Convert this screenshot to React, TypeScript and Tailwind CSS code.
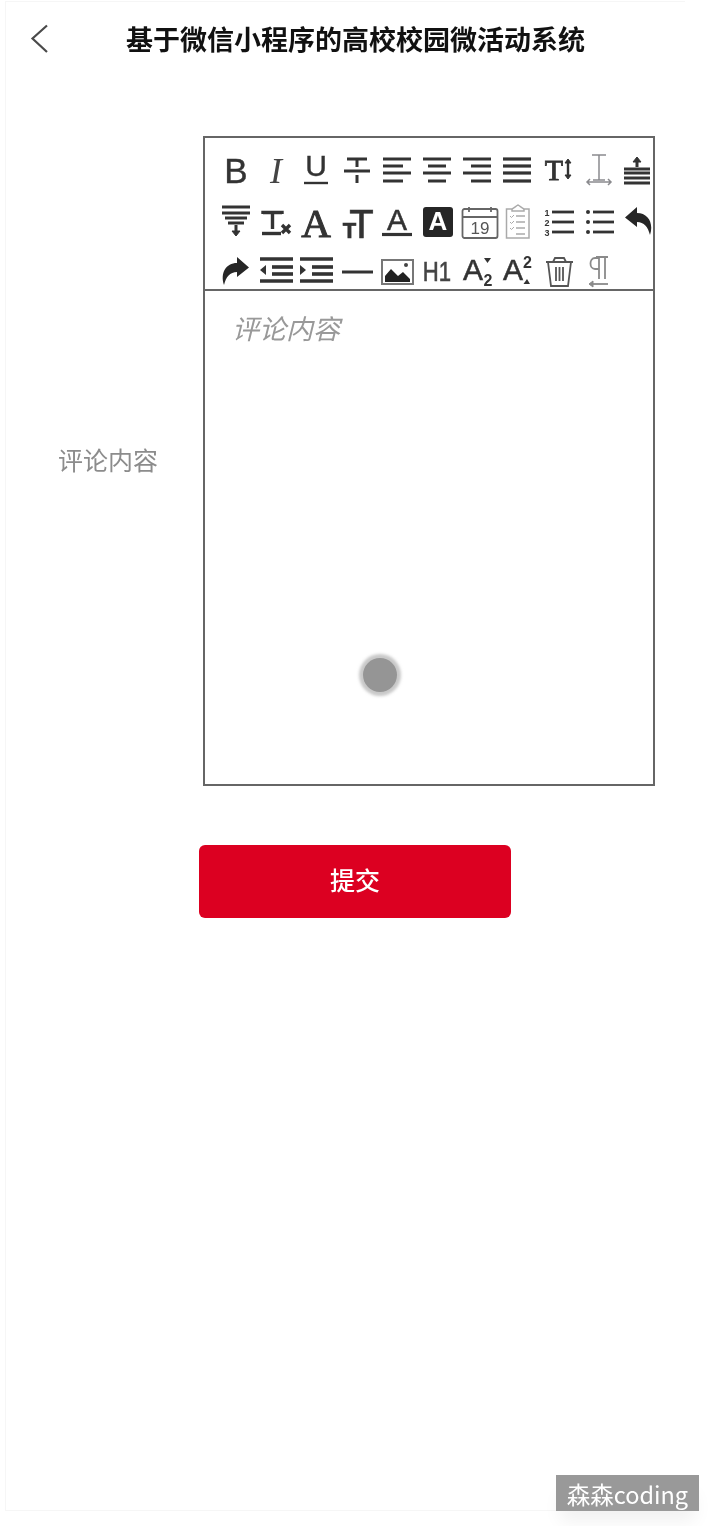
import React from "react";

const S = ({ children, c = "#333", w = 3 }: { children: React.ReactNode; c?: string; w?: number }) => (
  <svg width="40" height="40" viewBox="0 0 40 40" fill="none" stroke={c} strokeWidth={w} className="overflow-visible">
    {children}
  </svg>
);

const sans = "'Liberation Sans', Arial, sans-serif";
const serif = "'Liberation Serif', 'Times New Roman', serif";

const T = ({ x, y, size, font = sans, weight = 400, italic = false, fill = "#333", heavy = 0.7, children }: { x: number; y: number; size: number; font?: string; weight?: number; italic?: boolean; fill?: string; heavy?: number; children: React.ReactNode }) => (
  <text x={x} y={y} fontSize={size} fontFamily={font} fontWeight={weight} fontStyle={italic ? "italic" : "normal"} fill={fill} stroke={fill} strokeWidth={heavy} textAnchor="middle">
    {children}
  </text>
);

const Lines = ({ rows }: { rows: [number, number, number][] }) => (
  <>
    {rows.map(([x1, x2, y], i) => (
      <line key={i} x1={x1} x2={x2} y1={y} y2={y} />
    ))}
  </>
);

const undoPath = "M7 16.5 L19 6 V12 C30 12 36 22 32 34 C30 26 26 21 19 21 V26 Z";

const icons: React.ReactNode[] = [
  <S><T x={20} y={33} size={35} heavy={0.4}>B</T></S>,
  <S><T x={20} y={33} size={36} font={serif} italic fill="#444" heavy={0}>I</T></S>,
  <S><T x={20} y={26} size={30} heavy={0.4}>U</T><line x1="8" x2="32" y1="33" y2="33" strokeWidth={2.4} /></S>,
  <S><path d="M10 9H30M20 9V17M20 25V33M7 21H33" /></S>,
  <S><Lines rows={[[6, 34, 9], [6, 26, 16], [6, 34, 23], [6, 26, 31]]} /></S>,
  <S><Lines rows={[[6, 34, 9], [11, 29, 16], [6, 34, 23], [11, 29, 31]]} /></S>,
  <S><Lines rows={[[6, 34, 9], [14, 34, 16], [6, 34, 23], [14, 34, 31]]} /></S>,
  <S w={3.2}><Lines rows={[[6, 34, 9], [6, 34, 16], [6, 34, 23], [6, 34, 31]]} /></S>,
  <S w={2.4}><T x={16} y={30} size={30} font={serif} heavy={0.8}>T</T><path d="M30 11V27" /><path d="M27 13L30 9L33 13ZM27 25L30 29L33 25Z" fill="#333" strokeWidth={1} /></S>,
  <S c="#8a8a8e" w={1.5}><path d="M14 5H28M21 5V30M15 30H27M9 32H33M12 29L9 32L12 35M30 29L33 32L30 35" /></S>,
  <S><Lines rows={[[6, 32, 19], [6, 32, 23], [6, 32, 28], [6, 32, 33]]} /><path d="M19 10V17" /><path d="M15 12L19 7L23 12Z" fill="#333" strokeWidth={1} /></S>,

  <S><Lines rows={[[6, 34, 6], [6, 34, 12], [9, 31, 17], [12, 28, 22]]} /><path d="M20 24V32" /><path d="M16 30L20 35L24 30Z" fill="#333" strokeWidth={1} /></S>,
  <S w={3.4}><path d="M7 13V11.5H26V13M16.5 12V28" /><path d="M6 32.5H25" /><path d="M26 24L34 32M34 24L26 32" /></S>,
  <S><T x={20} y={36} size={41} font={serif} heavy={1}>A</T></S>,
  <S><T x={24.4} y={37} size={40} font={sans} fill="#333" heavy={0.6}>T</T><T x={12.4} y={37} size={22} weight={700}>T</T></S>,
  <S w={3.2}><T x={20} y={29} size={30} heavy={0.5}>A</T><line x1="5" x2="35" y1="33.5" y2="33.5" /></S>,
  <S><rect x="6" y="6" width="30" height="30" rx="3" fill="#262626" stroke="none" /><T x={21} y={29} size={26} weight={700} fill="#fff" heavy={0}>A</T></S>,
  <S c="#666" w={1.8}><rect x="5.5" y="8" width="35" height="29" rx="2" /><path d="M5.5 16H40.5M12 6V11M34 6V11M12 8H34" /><T x={23} y={33} size={17} fill="#555" heavy={0}>19</T></S>,
  <S c="#aaa" w={1.5}><path d="M15 8H9.5V37H32V8H27M15 10V8C17 7 18 6 21 4C24 6 25 7 27 8V10Z" /><path d="M19 15H28M19 21H28M19 27H28M19 33H28" /><path d="M13 15L14.5 16.5L17 14M13 21L14.5 22.5L17 20M13 27L14.5 28.5L17 26" strokeWidth={1} /></S>,
  <S w={2.8}><Lines rows={[[14, 36, 11], [14, 36, 21], [14, 36, 31]]} /><T x={9} y={15} size={9} weight={700} heavy={0}>1</T><T x={9} y={25} size={9} weight={700} heavy={0}>2</T><T x={9} y={35} size={9} weight={700} heavy={0}>3</T></S>,
  <S w={2.8}><Lines rows={[[15, 36, 11], [15, 36, 21], [15, 36, 31]]} /><circle cx="10" cy="11" r="2" fill="#333" stroke="none" /><circle cx="10" cy="21" r="2" fill="#333" stroke="none" /><circle cx="10" cy="31" r="2" fill="#333" stroke="none" /></S>,
  <S><path d={undoPath} fill="#262626" stroke="none" /></S>,

  <S><path d={undoPath} transform="translate(40 0) scale(-1 1)" fill="#262626" stroke="none" /></S>,
  <S w={3.6}><Lines rows={[[4, 37, 8], [16, 37, 16], [16, 37, 23], [4, 37, 30]]} /><path d="M10 14V24L4 19Z" fill="#333" strokeWidth={0} /></S>,
  <S w={3.6}><Lines rows={[[4, 37, 8], [16, 37, 16], [16, 37, 23], [4, 37, 30]]} /><path d="M4 14V24L10 19Z" fill="#333" strokeWidth={0} /></S>,
  <S w={3}><line x1="5" x2="36" y1="21" y2="21" /></S>,
  <S c="#777" w={2}><rect x="5" y="9" width="31" height="24" /><path d="M8 31V25L14 18L21 25L26 21L33 28V31Z" fill="#222" stroke="none" /><circle cx="29" cy="14" r="2" fill="#444" stroke="none" /></S>,
  <S><g transform="translate(20 30) scale(0.82 1)"><T x={0} y={0} size={27} fill="#444" heavy={0.6}>H1</T></g></S>,
  <S><T x={16} y={29} size={30} heavy={0.5}>A</T><T x={31} y={35} size={16} weight={700} heavy={0}>2</T><path d="M27 7H34L30.5 12Z" fill="#333" stroke="none" /></S>,
  <S><T x={16} y={29} size={30} heavy={0.5}>A</T><T x={30.5} y={17} size={16} weight={700} heavy={0}>2</T><path d="M26.5 33H33L30 28Z" fill="#333" stroke="none" /></S>,
  <S c="#555" w={1.8}><path d="M8 11H35M15 11L17 7H26L28 11M10 11L13 35H30L33 11M18 16V30M21.5 16V30M25 16V30" /></S>,
  <S c="#8a8a8a" w={1.8}><path d="M21 7H17C11 7 11 18 17 18H21M21 6V28M27 6V28M18 6H30" /><path d="M14 33H30" /><path d="M15 30L11 33L15 36Z" fill="#8a8a8a" strokeWidth={1} /></S>,
];

export default function App() {
  return (
    <div
      className="relative h-[1526px] w-full overflow-hidden bg-white text-[#333] blur-[0.4px]"
      style={{ fontFamily: "'Noto Sans CJK SC', sans-serif" }}
    >
      <div className="ml-[5px] mr-[24px] mt-[1px] h-[1510px] border-y border-l border-[#f6f6f6]">
        <header className="relative flex h-[78px] items-center justify-center pb-[4px] pl-[20px]">
          <svg width="20" height="30" viewBox="0 0 20 30" fill="none" stroke="#4a4a4a" strokeWidth="2.2" className="absolute left-[24px] top-[22px]">
            <path d="M17 1.5L2.5 14.5L17 28" />
          </svg>
          <h1 className="text-[27px] font-semibold leading-[38px] text-[#111]">基于微信小程序的高校校园微活动系统</h1>
        </header>

        <div className="mt-[56px] flex items-center">
          <span className="ml-[52px] w-[145px] pb-[4px] text-[25px] leading-[36px] text-[#8c8c8c]">评论内容</span>
          <div className="relative h-[650px] w-[452px] border-2 border-[#666]">
            <div className="grid h-[153px] auto-rows-[50.5px] grid-cols-[repeat(11,40.2px)] overflow-hidden border-b-2 border-[#666] pl-[11px] pt-[7px]">
              {icons.map((icon, i) => (
                <div key={i} className="flex items-center justify-center">
                  {icon}
                </div>
              ))}
            </div>
            <p className="pl-[27px] pt-[18px] text-[27px] italic leading-[38px] text-[#999]">评论内容</p>
            <div className="absolute left-[158px] top-[520px] h-[34px] w-[34px] rounded-full bg-[#959595] shadow-[0_0_3px_4px_rgba(170,170,170,0.65)]" />
          </div>
        </div>

        <button className="ml-[193px] mt-[59px] flex h-[73px] w-[312px] items-center justify-center rounded-[6px] bg-[#dc0021] pb-[3px] text-[25px] font-medium text-white">
          提交
        </button>
      </div>

      <div className="absolute bottom-[15px] right-[10px] flex h-[36px] w-[143px] items-center justify-center bg-[#999] pt-[3px] text-[23.5px] leading-[33px] text-white shadow-[0_14px_18px_-4px_rgba(0,0,0,0.06)]">
        森森coding
      </div>
    </div>
  );
}
